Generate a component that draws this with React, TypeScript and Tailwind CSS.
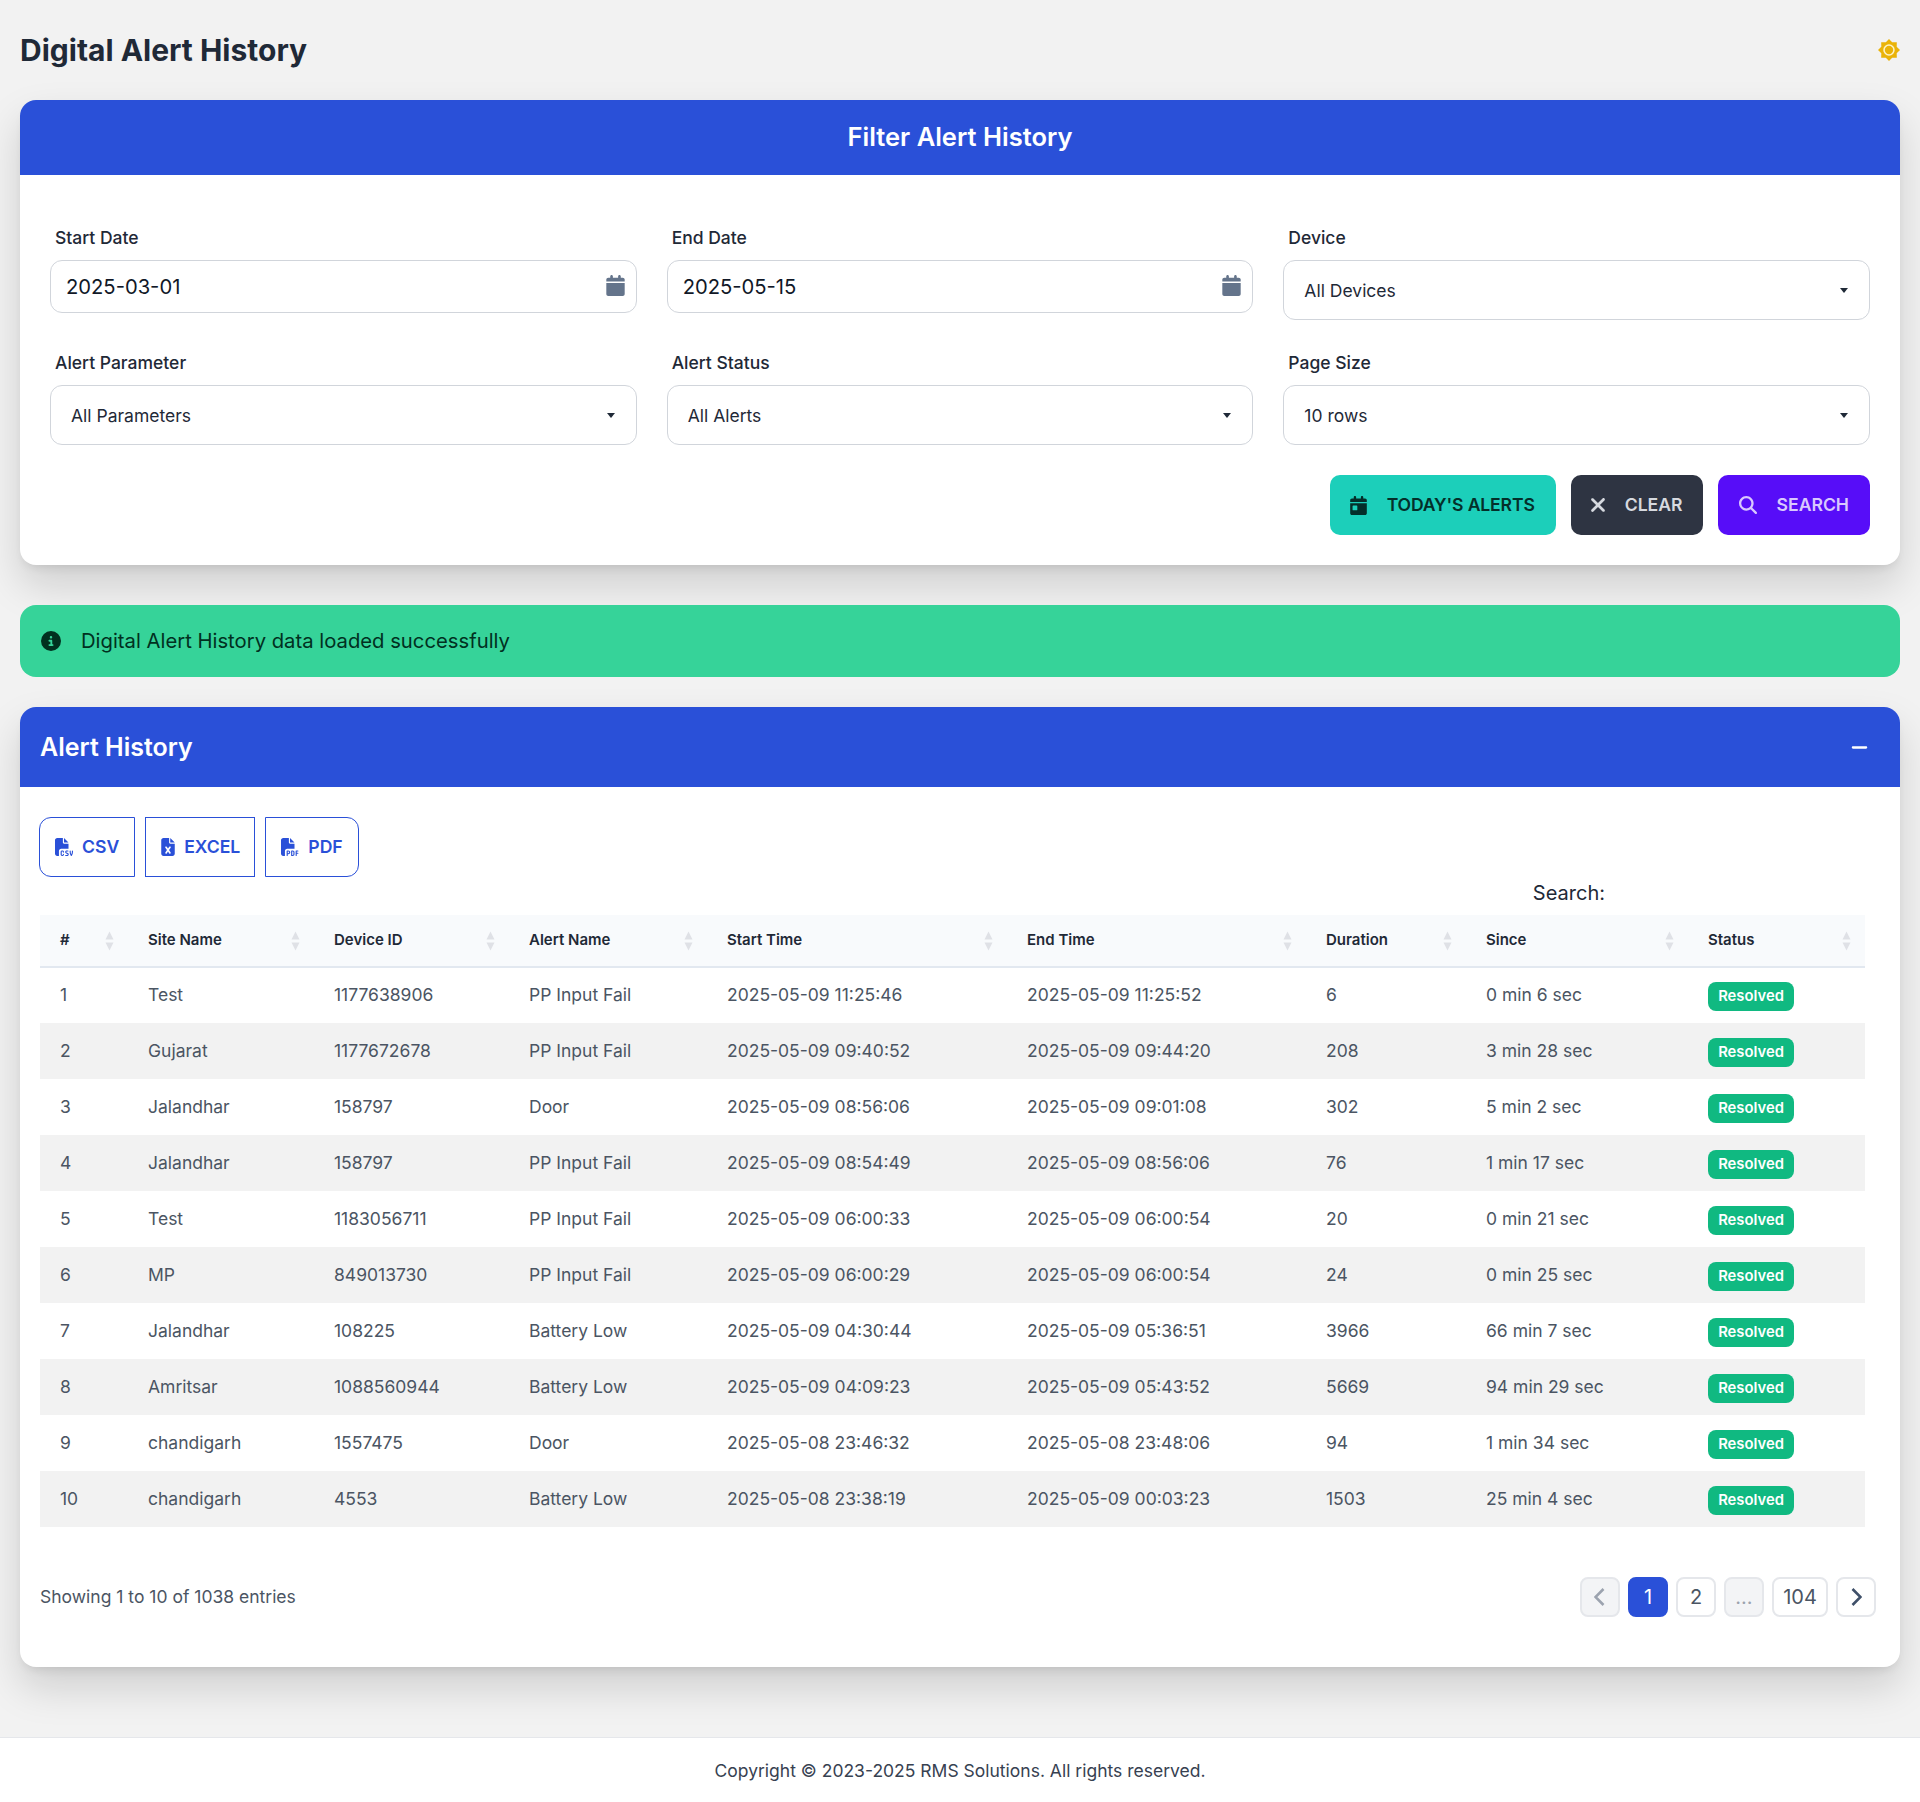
import React from "react";
import { FaCalendar, FaCalendarDay, FaXmark, FaMagnifyingGlass, FaFileCsv, FaFileExcel, FaFilePdf, FaCircleInfo, FaMinus } from "react-icons/fa6";

const rows = [
  ["1", "Test", "1177638906", "PP Input Fail", "2025-05-09 11:25:46", "2025-05-09 11:25:52", "6", "0 min 6 sec"],
  ["2", "Gujarat", "1177672678", "PP Input Fail", "2025-05-09 09:40:52", "2025-05-09 09:44:20", "208", "3 min 28 sec"],
  ["3", "Jalandhar", "158797", "Door", "2025-05-09 08:56:06", "2025-05-09 09:01:08", "302", "5 min 2 sec"],
  ["4", "Jalandhar", "158797", "PP Input Fail", "2025-05-09 08:54:49", "2025-05-09 08:56:06", "76", "1 min 17 sec"],
  ["5", "Test", "1183056711", "PP Input Fail", "2025-05-09 06:00:33", "2025-05-09 06:00:54", "20", "0 min 21 sec"],
  ["6", "MP", "849013730", "PP Input Fail", "2025-05-09 06:00:29", "2025-05-09 06:00:54", "24", "0 min 25 sec"],
  ["7", "Jalandhar", "108225", "Battery Low", "2025-05-09 04:30:44", "2025-05-09 05:36:51", "3966", "66 min 7 sec"],
  ["8", "Amritsar", "1088560944", "Battery Low", "2025-05-09 04:09:23", "2025-05-09 05:43:52", "5669", "94 min 29 sec"],
  ["9", "chandigarh", "1557475", "Door", "2025-05-08 23:46:32", "2025-05-08 23:48:06", "94", "1 min 34 sec"],
  ["10", "chandigarh", "4553", "Battery Low", "2025-05-08 23:38:19", "2025-05-09 00:03:23", "1503", "25 min 4 sec"],
];

const columns = ["#", "Site Name", "Device ID", "Alert Name", "Start Time", "End Time", "Duration", "Since", "Status"];

function DateField({ label, value }: { label: string; value: string }) {
  return (
    <div>
      <label className="block h-[36px] pl-[5px] text-[17.5px] leading-[27px] font-medium text-[#1f2937]">{label}</label>
      <div className="relative">
        <input
          readOnly
          value={value}
          className="w-full h-[53px] rounded-xl border border-[#d1d5db] bg-white pl-[15px] pr-10 text-[20.2px] text-[#111827] outline-none"
        />
        <FaCalendar size={21} className="absolute right-[11px] top-[15px] text-[#64748b]" />
      </div>
    </div>
  );
}

function SelectField({ label, value }: { label: string; value: string }) {
  return (
    <div>
      <label className="block h-[36px] pl-[5px] text-[17.5px] leading-[27px] font-medium text-[#1f2937]">{label}</label>
      <div className="flex items-center justify-between h-[60px] rounded-xl border border-[#d1d5db] bg-white pl-[20px] pr-[21px] text-[17.5px] text-[#1f2937]">
        <span className="pt-[2px]">{value}</span>
        <span className="w-0 h-0 border-x-[4.5px] border-x-transparent border-t-[5px] border-t-[#1f2937]" />
      </div>
    </div>
  );
}

function SortArrows() {
  return (
    <svg width="9" height="20" viewBox="0 0 9 20" className="text-[#dfe1e6] shrink-0">
      <path d="M4.5 0.5 L8.5 8.5 H0.5 Z" fill="currentColor" />
      <path d="M0.5 11.5 H8.5 L4.5 19.5 Z" fill="currentColor" />
    </svg>
  );
}

function Chevron({ left = false }: { left?: boolean }) {
  return (
    <svg width="12" height="18" viewBox="0 0 12 18" fill="none" stroke="currentColor" strokeWidth="2.6">
      <path d={left ? "M9.5 1 L1.5 9 L9.5 17" : "M2.5 1 L10.5 9 L2.5 17"} />
    </svg>
  );
}

function SunIcon() {
  return (
    <svg width="22" height="22" viewBox="0 0 20 20" className="text-[#eab308]">
      <path
        fill="currentColor"
        d="M10 0 L12.9 3 L17.1 2.9 L17 7.1 L20 10 L17 12.9 L17.1 17.1 L12.9 17 L10 20 L7.1 17 L2.9 17.1 L3 12.9 L0 10 L3 7.1 L2.9 2.9 L7.1 3 Z"
      />
      <circle cx="10" cy="10" r="5.2" fill="#fdf3c7" />
      <circle cx="10" cy="10" r="3.8" fill="currentColor" />
    </svg>
  );
}

function PageButton({ children, kind = "plain", wide = false }: { children: React.ReactNode; kind?: "plain" | "active" | "disabled" | "next"; wide?: boolean }) {
  const look =
    kind === "active"
      ? "bg-[#2a50d8] border-[#2a50d8] text-white"
      : kind === "disabled"
        ? "bg-[#f3f4f6] border-[#e5e7eb] text-[#9ca3af]"
        : kind === "next"
          ? "bg-white border-[#e5e7eb] text-[#3f5069]"
          : "bg-white border-[#e5e7eb] text-[#4b5563]";
  return (
    <button className={`flex items-center justify-center h-10 rounded-lg border-2 text-[20px] ${wide ? "w-14" : "w-10"} ${look}`}>
      {children}
    </button>
  );
}

export default function App() {
  return (
    <div className="min-h-[1802px] bg-[#f2f2f2] text-[#1f2937] font-['Inter',sans-serif]">
      <div className="px-5 pb-[70px]">
        {/* Title */}
        <div className="flex items-center justify-between h-[100px]">
          <h1 className="text-[30px] leading-9 font-bold text-[#1f2937]">Digital Alert History</h1>
          <SunIcon />
        </div>

        {/* Filter card */}
        <div className="rounded-2xl bg-white shadow-[0_6px_10px_-4px_rgba(0,0,0,0.1),0_20px_40px_rgba(0,0,0,0.15)] overflow-hidden">
          <div className="flex items-center justify-center h-[75px] bg-[#2a50d8] text-[25.5px] font-semibold text-white">
            Filter Alert History
          </div>
          <div className="px-[30px] pt-[49px] pb-[30px]">
            <div className="grid grid-cols-3 gap-x-[30px] gap-y-[29px]">
              <DateField label="Start Date" value="2025-03-01" />
              <DateField label="End Date" value="2025-05-15" />
              <SelectField label="Device" value="All Devices" />
              <SelectField label="Alert Parameter" value="All Parameters" />
              <SelectField label="Alert Status" value="All Alerts" />
              <SelectField label="Page Size" value="10 rows" />
            </div>
            <div className="flex justify-end gap-[15px] mt-[30px]">
              <button className="flex items-center gap-[19px] h-[60px] pl-[19px] pr-[21px] rounded-[10px] bg-[#1ccfba] text-[#042f2a] text-[17.6px] font-semibold tracking-[-0.15px]">
                <FaCalendarDay size={19} />
                TODAY'S ALERTS
              </button>
              <button className="flex items-center gap-[15.5px] h-[60px] pl-[16.5px] pr-5 rounded-[10px] bg-[#2e3442] text-[#d6d9df] text-[17.6px] font-semibold">
                <FaXmark size={22} />
                CLEAR
              </button>
              <button className="flex items-center gap-[20px] h-[60px] pl-[21px] pr-[21px] rounded-[10px] bg-[#570df8] text-[#d9c8fe] text-[17.6px] font-semibold">
                <FaMagnifyingGlass size={18} />
                SEARCH
              </button>
            </div>
          </div>
        </div>

        {/* Alert */}
        <div className="flex items-center gap-[20px] h-[72px] mt-10 px-[21px] rounded-2xl bg-[#36d399] text-[20.25px] text-[#01301f]">
          <FaCircleInfo size={20} />
          Digital Alert History data loaded successfully
        </div>

        {/* Alert history card */}
        <div className="mt-[30px] rounded-2xl bg-white shadow-[0_6px_10px_-4px_rgba(0,0,0,0.1),0_20px_40px_rgba(0,0,0,0.15)] overflow-hidden">
          <div className="flex items-center justify-between h-20 pl-5 pr-[31px] bg-[#2a50d8] text-white">
            <h2 className="pt-[2px] text-[25px] font-semibold">Alert History</h2>
            <FaMinus size={19} />
          </div>
          <div className="px-5 pt-[30px] pb-[50px]">
            <div className="flex gap-[10px] -ml-[1px]">
              <button className="flex items-center gap-[9px] h-[60px] pl-[15px] pr-[15px] rounded-l-xl border border-[#2a50d8] text-[#2a50d8] text-[17.6px] font-semibold">
                <FaFileCsv size={18} />
                CSV
              </button>
              <button className="flex items-center gap-[7px] h-[60px] pl-[13px] pr-[14px] border border-[#2a50d8] text-[#2a50d8] text-[17.6px] font-semibold">
                <FaFileExcel size={18} />
                EXCEL
              </button>
              <button className="flex items-center gap-[9px] h-[60px] pl-[15px] pr-[15px] rounded-r-xl border border-[#2a50d8] text-[#2a50d8] text-[17.6px] font-semibold">
                <FaFilePdf size={18} />
                PDF
              </button>
            </div>

            <div className="flex items-center justify-end h-[38px] pb-[7px] pr-[275px] text-[20px] text-[#1f2937]">Search:</div>

            <table className="w-[1825px] table-fixed border-collapse">
              <colgroup>
                <col className="w-[88px]" />
                <col className="w-[186px]" />
                <col className="w-[195px]" />
                <col className="w-[198px]" />
                <col className="w-[300px]" />
                <col className="w-[299px]" />
                <col className="w-[160px]" />
                <col className="w-[222px]" />
                <col className="w-[177px]" />
              </colgroup>
              <thead>
                <tr className="h-[52px] bg-[#f8fafc] border-b-2 border-[#e2e8f0]">
                  {columns.map((c) => (
                    <th key={c} className="pl-5 pr-[14px] text-left text-[15px] font-semibold text-[#1f2937]">
                      <div className="flex items-center justify-between">
                        {c}
                        <SortArrows />
                      </div>
                    </th>
                  ))}
                </tr>
              </thead>
              <tbody>
                {rows.map((r, i) => (
                  <tr key={r[0]} className={`h-[56px] ${i % 2 === 1 ? "bg-[#f2f2f2]" : "bg-white"}`}>
                    {r.map((cell, j) => (
                      <td key={j} className="pl-5 text-[17.5px] text-[#4b5563]">{cell}</td>
                    ))}
                    <td className="pl-5 pt-[2px]">
                      <span className="inline-flex items-center justify-center w-[86px] h-[29px] rounded-lg bg-[#10b981] text-[14.8px] font-semibold text-white">
                        Resolved
                      </span>
                    </td>
                  </tr>
                ))}
              </tbody>
            </table>

            <div className="flex items-center justify-between mt-[50px] pr-[4px]">
              <div className="text-[17.5px] text-[#4b5563]">Showing 1 to 10 of 1038 entries</div>
              <div className="flex gap-2">
                <PageButton kind="disabled"><Chevron left /></PageButton>
                <PageButton kind="active">1</PageButton>
                <PageButton>2</PageButton>
                <PageButton kind="disabled">...</PageButton>
                <PageButton wide>104</PageButton>
                <PageButton kind="next"><Chevron /></PageButton>
              </div>
            </div>
          </div>
        </div>
      </div>

      {/* Footer */}
      <footer className="flex items-center justify-center h-[65px] pt-[2px] border-t border-[#e5e7eb] bg-white text-[17.5px] text-[#374151]">
        Copyright © 2023-2025 RMS Solutions. All rights reserved.
      </footer>
    </div>
  );
}
